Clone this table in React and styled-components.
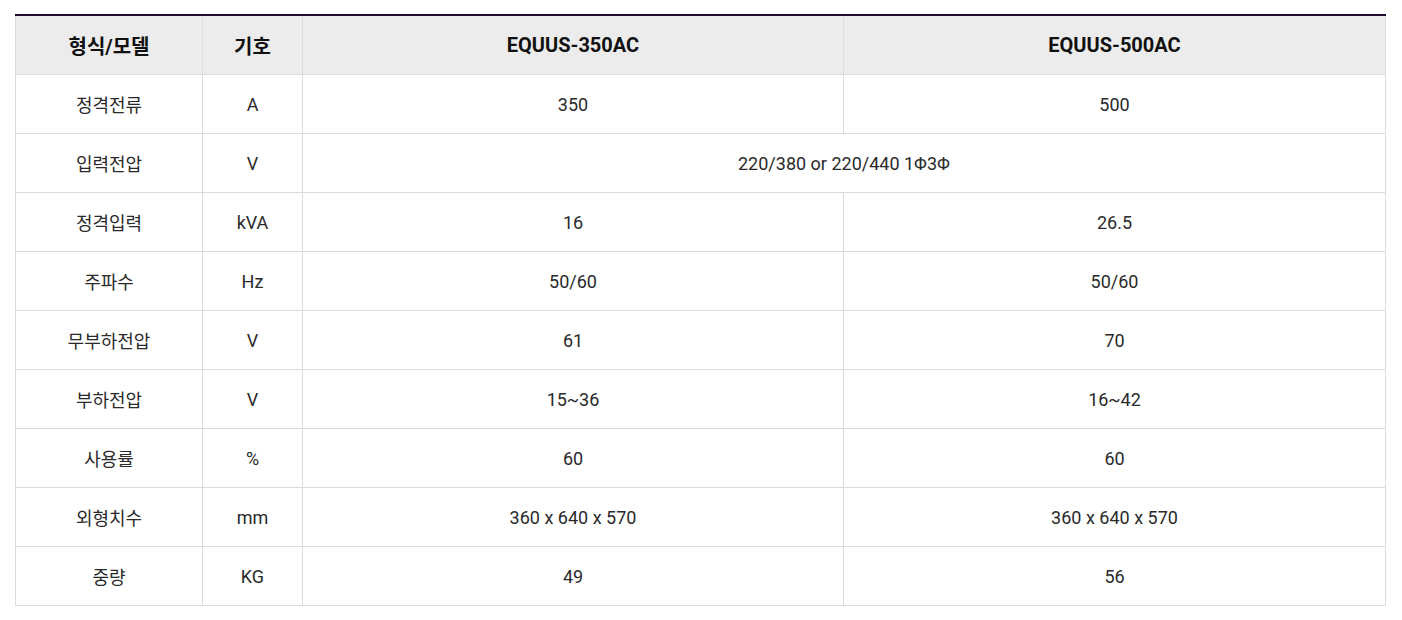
import React from "react";
import styled, { createGlobalStyle } from "styled-components";

const Global = createGlobalStyle`
  html, body { margin: 0; padding: 0; background: #fff; }
  body { font-family: Roboto, "Noto Sans CJK KR", sans-serif; }
`;

const Wrap = styled.div`
  padding: 14px 16px 0 15px;
`;

const Table = styled.table`
  width: 1371px;
  border-collapse: collapse;
  table-layout: fixed;
  border-top: 2px solid #1e0b2e;
  font-family: Roboto, "Noto Sans CJK KR", sans-serif;
`;

const Th = styled.th`
  height: 58px;
  padding: 0;
  background: #ececec;
  border: 1px solid #dcdcdc;
  border-top: none;
  font-size: 20px;
  font-weight: 700;
  color: #111;
  text-align: center;
`;

const Td = styled.td`
  height: 58px;
  padding: 0;
  border: 1px solid #dcdcdc;
  font-size: 18px;
  font-weight: 400;
  color: #2a2a2a;
  text-align: center;
`;

const rows = [
  ["정격전류", "A", "350", "500"],
  ["입력전압", "V", "220/380 or 220/440 1Φ3Φ"],
  ["정격입력", "kVA", "16", "26.5"],
  ["주파수", "Hz", "50/60", "50/60"],
  ["무부하전압", "V", "61", "70"],
  ["부하전압", "V", "15~36", "16~42"],
  ["사용률", "%", "60", "60"],
  ["외형치수", "mm", "360 x 640 x 570", "360 x 640 x 570"],
  ["중량", "KG", "49", "56"],
];

export default function App() {
  return (
    <Wrap>
      <Global />
      <Table>
        <colgroup>
          <col style={{ width: 187 }} />
          <col style={{ width: 100 }} />
          <col style={{ width: 541 }} />
          <col style={{ width: 542 }} />
        </colgroup>
        <thead>
          <tr>
            <Th>형식/모델</Th>
            <Th>기호</Th>
            <Th>EQUUS-350AC</Th>
            <Th>EQUUS-500AC</Th>
          </tr>
        </thead>
        <tbody>
          {rows.map((r) => (
            <tr key={r[0]}>
              <Td>{r[0]}</Td>
              <Td>{r[1]}</Td>
              {r.length === 3 ? (
                <Td colSpan={2}>{r[2]}</Td>
              ) : (
                <>
                  <Td>{r[2]}</Td>
                  <Td>{r[3]}</Td>
                </>
              )}
            </tr>
          ))}
        </tbody>
      </Table>
    </Wrap>
  );
}
